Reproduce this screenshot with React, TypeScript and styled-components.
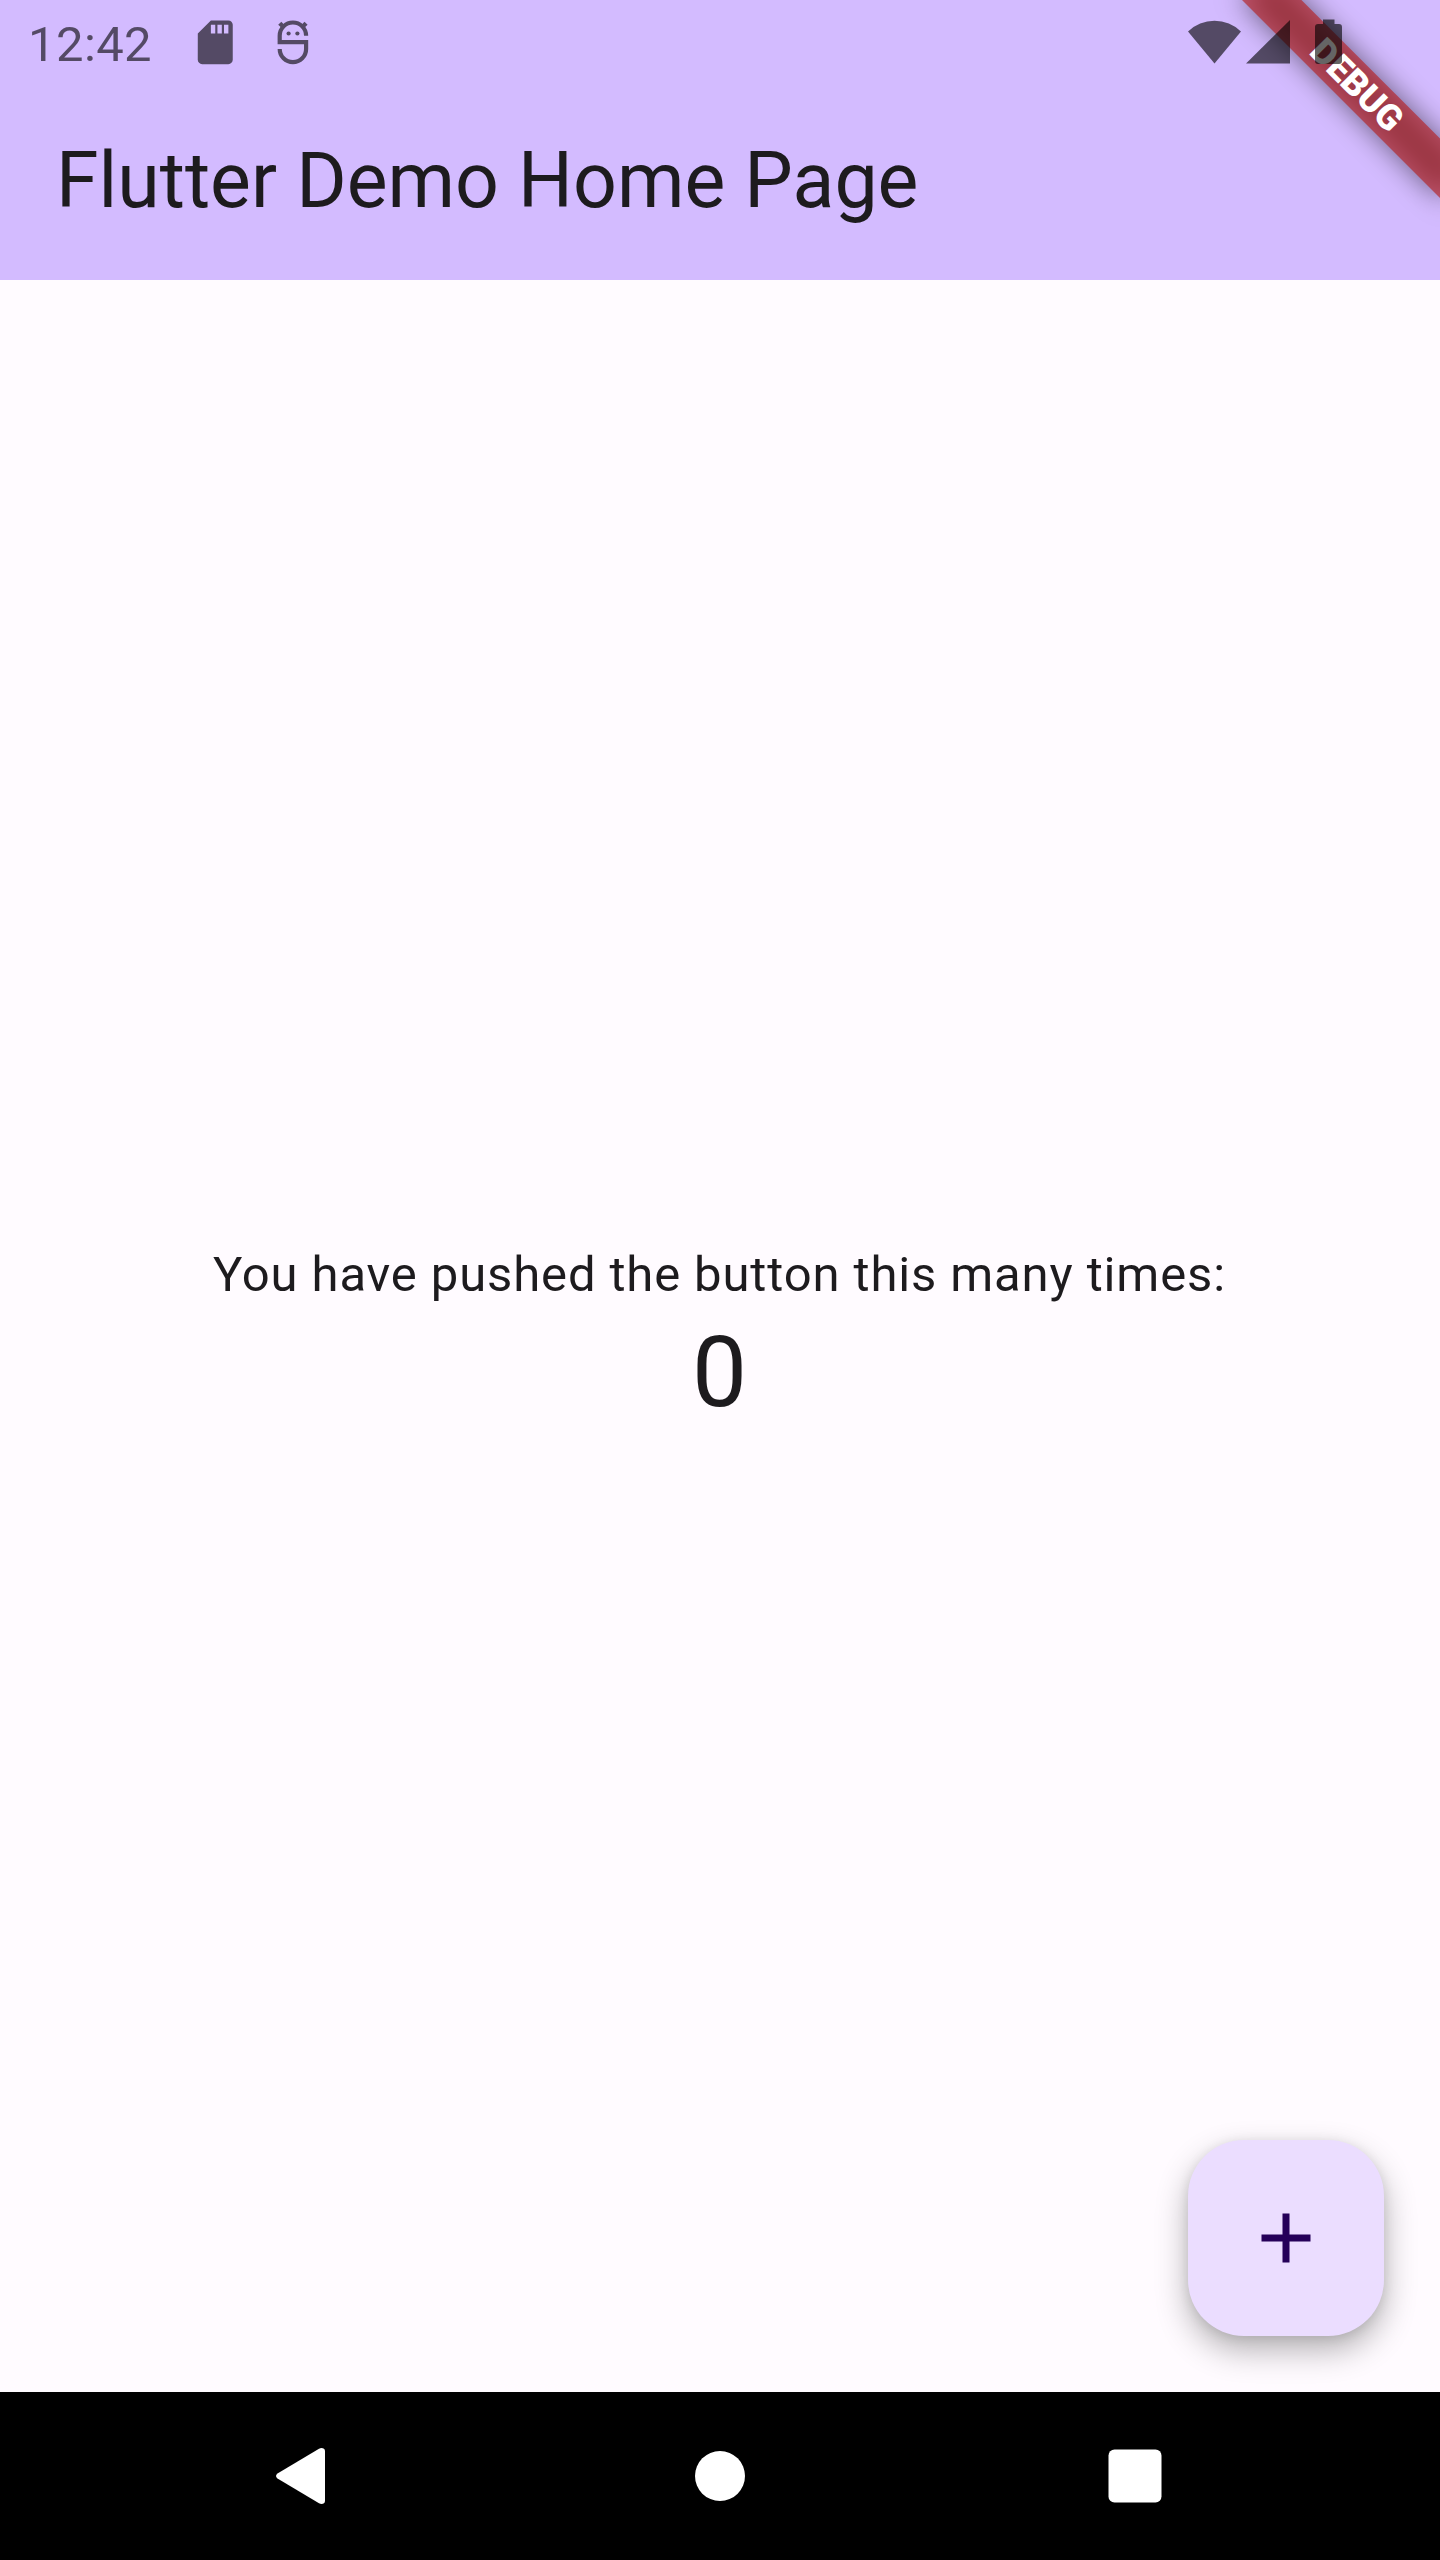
import React, { useState } from "react";
import styled, { createGlobalStyle } from "styled-components";

const GlobalStyle = createGlobalStyle`
  *, *::before, *::after { box-sizing: border-box; }
  html, body { margin: 0; padding: 0; background: #fffbff; }
`;

const Screen = styled.div`
  position: relative;
  display: flex;
  flex-direction: column;
  width: 1440px;
  height: 2560px;
  overflow: hidden;
  background: #fffbff;
  color: #1d1b1e;
  font-family: Roboto, "Noto Sans", sans-serif;
`;

const Header = styled.header`
  flex: none;
  height: 280px;
  background: #d3bbff;
`;

const StatusBar = styled.div`
  position: relative;
  z-index: 2;
  display: flex;
  align-items: center;
  justify-content: space-between;
  height: 84px;
  padding: 0 96px 0 28px;
  color: #000;
  opacity: 0.6;
`;

const StatusGroup = styled.div<{ $gap: number }>`
  display: flex;
  align-items: center;
  gap: ${(p) => p.$gap}px;
`;

const Clock = styled.span`
  width: 126px;
  padding-top: 5px;
  font-size: 49px;
  line-height: 56px;
  letter-spacing: 0.4px;
  white-space: nowrap;
`;

const Glyph = styled.svg`
  display: block;
  flex: none;
  fill: currentColor;
`;

const AppBar = styled.div`
  display: flex;
  align-items: center;
  height: 196px;
  padding: 0 56px 2px;
`;

const Title = styled.h1`
  margin: 0;
  font-size: 77px;
  font-weight: 400;
  line-height: 98px;
  white-space: nowrap;
`;

const BannerCorner = styled.div`
  position: absolute;
  z-index: 1;
  top: 0;
  right: 0;
  width: 280px;
  height: 280px;
  overflow: hidden;
`;

const Banner = styled.div`
  position: absolute;
  top: 98px;
  left: 140px;
  width: 280px;
  height: 42px;
  transform: rotate(45deg);
  transform-origin: 140px -98px;

  &::before {
    content: "";
    position: absolute;
    inset: 0;
    background: rgba(0, 0, 0, 0.5);
    filter: blur(13.9px);
  }
`;

const BannerLabel = styled.div`
  position: relative;
  height: 42px;
  padding-left: 3px;
  background: rgba(183, 28, 28, 0.627);
  color: #fff;
  font-size: 35.7px;
  font-weight: 900;
  line-height: 42px;
  text-align: center;
`;

const Body = styled.main`
  position: relative;
  flex: 1;
  display: flex;
  flex-direction: column;
  align-items: center;
  justify-content: center;
  padding: 4px 1px 0 0;
`;

const Message = styled.p`
  margin: 0;
  font-size: 49px;
  line-height: 70px;
  letter-spacing: 0.875px;
  white-space: nowrap;
`;

const Count = styled.p`
  margin: 0;
  font-size: 98px;
  line-height: 126px;
`;

const Fab = styled.button`
  position: absolute;
  right: 56px;
  bottom: 56px;
  display: flex;
  align-items: center;
  justify-content: center;
  width: 196px;
  height: 196px;
  padding: 0;
  border: 0;
  border-radius: 56px;
  background: #ebddff;
  color: #250059;
  box-shadow: 0 14px 32px rgba(0, 0, 0, 0.3), 0 2px 12px rgba(0, 0, 0, 0.09);
`;

const NavBar = styled.nav`
  flex: none;
  display: flex;
  align-items: center;
  justify-content: center;
  height: 168px;
  background: #000;
`;

const NavButton = styled.button<{ $nudge?: number }>`
  display: flex;
  align-items: center;
  justify-content: center;
  width: 415px;
  height: 168px;
  padding: 0 ${(p) => p.$nudge ?? 0}px 0 0;
  border: 0;
  background: transparent;
  color: #fff;
`;

export default function App() {
  const [count, setCount] = useState(0);

  return (
    <>
      <GlobalStyle />
      <Screen>
        <Header>
          <StatusBar>
            <StatusGroup $gap={35}>
              <Clock>12:42</Clock>
              <Glyph width="52.5" height="52.5" viewBox="0 0 24 24">
                <path d="M18 2h-8L4.02 8 4 20c0 1.1.9 2 2 2h12c1.1 0 2-.9 2-2V4c0-1.1-.9-2-2-2zm-6 6h-2V4h2v4zm3 0h-2V4h2v4zm3 0h-2V4h2v4z" />
              </Glyph>
              <Glyph width="32" height="46" viewBox="0 0 32 46">
                <path
                  d="M29.100 16.700A13.200 13.200 0 0 0 2.700 16.700V23.200H29.100V30A13.200 13.200 0 0 1 2.700 30"
                  fill="none"
                  stroke="currentColor"
                  strokeWidth="4.200"
                />
                <path d="M1.200 5.700L4.300 2.700L7.500 5.900L4.700 8.900ZM30.600 5.700L27.500 2.700L24.300 5.900L27.100 8.900Z" />
                <circle cx="11.600" cy="14.500" r="2.100" />
                <circle cx="20.400" cy="14.500" r="2.100" />
              </Glyph>
            </StatusGroup>
            <StatusGroup $gap={0}>
              <Glyph width="156" height="46" viewBox="0 0 156 46">
                <path d="M0 12.500A38 38 0 0 1 53 12.500L26.500 44.500Z" />
                <path d="M102 1V44.500H58Z" />
                <path d="M135 .5H146.500V5H151A3 3 0 0 1 154 8V42A3 3 0 0 1 151 45H130A3 3 0 0 1 127 42V8A3 3 0 0 1 130 5H135Z" />
              </Glyph>
            </StatusGroup>
          </StatusBar>
          <AppBar>
            <Title>Flutter Demo Home Page</Title>
          </AppBar>
        </Header>
        <BannerCorner>
          <Banner>
            <BannerLabel>DEBUG</BannerLabel>
          </Banner>
        </BannerCorner>
        <Body>
          <Message>You have pushed the button this many times:</Message>
          <Count>{count}</Count>
          <Fab aria-label="Increment" onClick={() => setCount(count + 1)}>
            <Glyph width="84" height="84" viewBox="0 0 24 24">
              <path d="M19 13h-6v6h-2v-6H5v-2h6V5h2v6h6v2z" />
            </Glyph>
          </Fab>
        </Body>
        <NavBar>
          <NavButton aria-label="Back" $nudge={3}>
            <Glyph width="56" height="56" viewBox="0 0 56 56">
              <path d="M1.500 25.500L43 .8Q45.500 -.6 48 .8Q49 1.600 49 3.500V52.500Q49 54.500 48 55.300Q45.500 56.600 43 55.200L1.500 30.500Q-1.500 28 1.500 25.500Z" />
            </Glyph>
          </NavButton>
          <NavButton aria-label="Home">
            <Glyph width="52" height="52" viewBox="0 0 52 52">
              <circle cx="26" cy="26" r="25" />
            </Glyph>
          </NavButton>
          <NavButton aria-label="Recents">
            <Glyph width="54" height="54" viewBox="0 0 54 54">
              <rect x=".5" y=".5" width="53" height="53" rx="6" />
            </Glyph>
          </NavButton>
        </NavBar>
      </Screen>
    </>
  );
}
